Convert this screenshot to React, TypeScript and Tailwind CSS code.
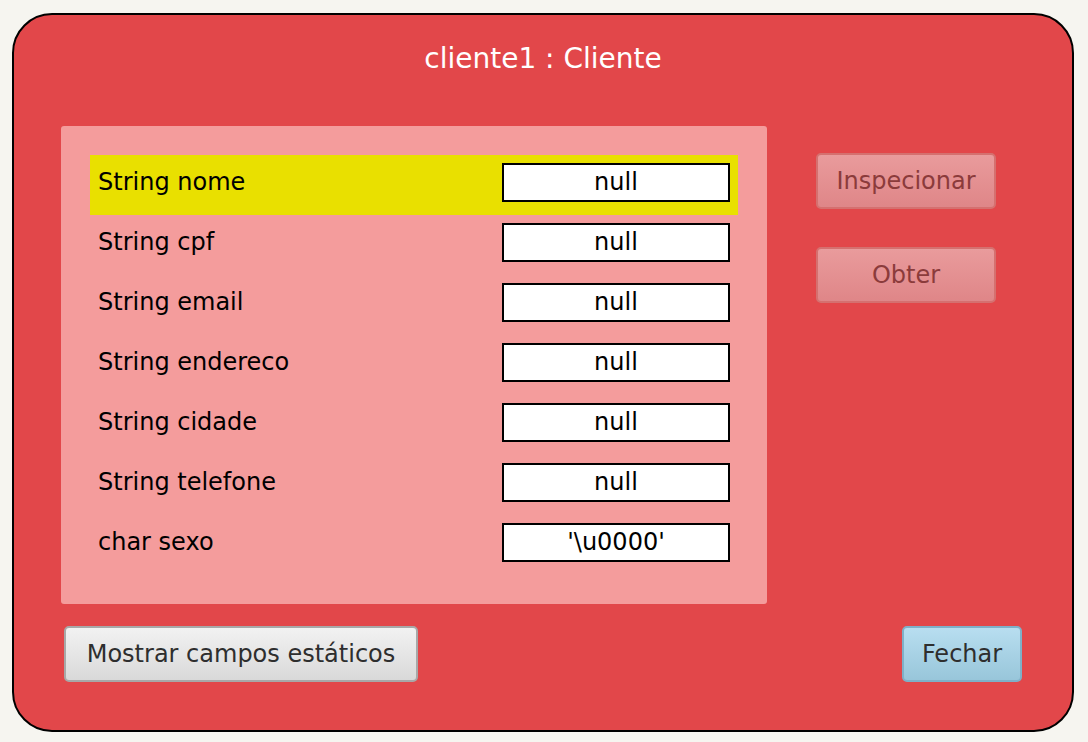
import React from "react";

const rows: [string, string][] = [
  ["String nome", "null"],
  ["String cpf", "null"],
  ["String email", "null"],
  ["String endereco", "null"],
  ["String cidade", "null"],
  ["String telefone", "null"],
  ["char sexo", "'\\u0000'"],
];

export default function App() {
  return (
    <div
      className="w-[1088px] h-[742px] bg-[#f6f5f0] pt-[13px] pl-[12px]"
      style={{ fontFamily: '"DejaVu Sans", "Noto Sans", sans-serif' }}
    >
      <div className="w-[1062px] h-[719px] rounded-[40px] border-2 border-black bg-[#e2474a] flex flex-col">
        <div className="h-[84px] pt-[24px] text-center text-white text-[28px] leading-[40px]">
          cliente1 : Cliente
        </div>
        <div className="flex mt-[27px]">
          <div className="ml-[47px] w-[706px] h-[478px] bg-[#f49c9c] rounded-[3px] pt-[29px] pl-[29px]">
            {rows.map(([label, value], i) => (
              <div
                key={i}
                className={`w-[648px] h-[60px] flex items-start ${i === 0 ? "bg-[#e9e000]" : ""}`}
              >
                <div className="w-[412px] pl-[8px] pt-[9px] text-[24px] leading-[37px] text-black">{label}</div>
                <div className="mt-[8px] w-[228px] h-[39px] bg-white border-2 border-black flex items-center justify-center text-[24px] leading-[35px] text-black">
                  {value}
                </div>
              </div>
            ))}
          </div>
          <div className="ml-[49px] pt-[27px] flex flex-col gap-[38px]">
            <button className="w-[180px] h-[56px] rounded-[5px] border-2 border-[#d5706f] bg-gradient-to-b from-[#e99b9c] to-[#df8688] text-[#8b3b3b] text-[24px]">
              Inspecionar
            </button>
            <button className="w-[180px] h-[56px] rounded-[5px] border-2 border-[#d5706f] bg-gradient-to-b from-[#e99b9c] to-[#df8688] text-[#8b3b3b] text-[24px]">
              Obter
            </button>
          </div>
        </div>
        <div className="flex justify-between mt-[22px] pl-[50px] pr-[50px]">
          <button className="w-[354px] h-[56px] rounded-[5px] border-2 border-[#a8a8a8] bg-gradient-to-b from-[#f2f2f2] to-[#d9d9d9] text-[#2e2e2e] text-[24px]">
            Mostrar campos estáticos
          </button>
          <button className="w-[120px] h-[56px] rounded-[5px] border-2 border-[#7fb0c8] bg-gradient-to-b from-[#b8def0] to-[#98c6da] text-[#2e2e2e] text-[24px]">
            Fechar
          </button>
        </div>
      </div>
    </div>
  );
}
